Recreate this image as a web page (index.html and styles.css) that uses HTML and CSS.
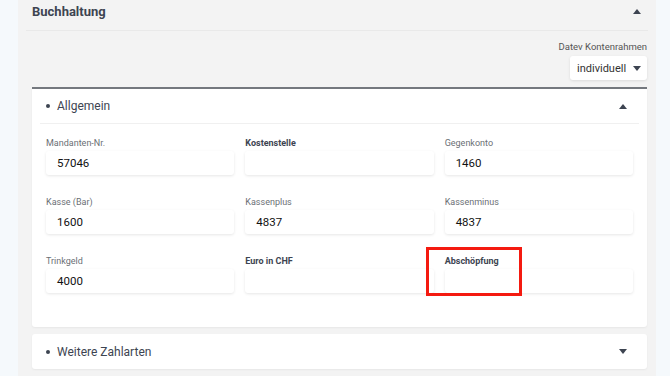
FILE: index.html
```html
<!DOCTYPE html>
<html lang="de">
<head>
  <meta charset="UTF-8" />
  <meta name="viewport" content="width=device-width, initial-scale=1.0"/>
  <title>Buchhaltung</title>
  <link rel="stylesheet" href="styles.css">
</head>
<body>
  <div class="page">
    <section class="panel">
      <div class="panel-header">
        <h2>Buchhaltung</h2>
        <svg class="caret" width="8" height="5" viewBox="0 0 8 5"><path d="M0 5 L4 0 L8 5 Z"/></svg>
      </div>

      <div class="panel-body">
        <div class="chart-select">
          <label for="datev">Datev Kontenrahmen</label>
          <div class="select-box" id="datev">
            <span>individuell</span>
            <svg class="caret" width="8" height="5" viewBox="0 0 8 5"><path d="M0 0 L8 0 L4 5 Z"/></svg>
          </div>
        </div>

        <div class="card card-open">
          <div class="card-header">
            <span class="bullet"></span>
            <span class="card-title">Allgemein</span>
            <svg class="caret" width="8" height="5" viewBox="0 0 8 5"><path d="M0 5 L4 0 L8 5 Z"/></svg>
          </div>

          <div class="fields">
            <div class="field">
              <label>Mandanten-Nr.</label>
              <div class="input">57046</div>
            </div>
            <div class="field">
              <label class="strong">Kostenstelle</label>
              <div class="input"></div>
            </div>
            <div class="field">
              <label>Gegenkonto</label>
              <div class="input">1460</div>
            </div>

            <div class="field">
              <label>Kasse (Bar)</label>
              <div class="input">1600</div>
            </div>
            <div class="field">
              <label>Kassenplus</label>
              <div class="input">4837</div>
            </div>
            <div class="field">
              <label>Kassenminus</label>
              <div class="input">4837</div>
            </div>

            <div class="field">
              <label>Trinkgeld</label>
              <div class="input">4000</div>
            </div>
            <div class="field">
              <label class="strong">Euro in CHF</label>
              <div class="input"></div>
            </div>
            <div class="field highlighted">
              <label class="strong">Abschöpfung</label>
              <div class="input"></div>
            </div>
          </div>
        </div>

        <div class="card">
          <div class="card-header">
            <span class="bullet"></span>
            <span class="card-title">Weitere Zahlarten</span>
            <svg class="caret" width="8" height="5" viewBox="0 0 8 5"><path d="M0 0 L8 0 L4 5 Z"/></svg>
          </div>
        </div>
      </div>
    </section>
  </div>
</body>
</html>
```

FILE: styles.css
```css
body {
  margin: 0;
  font-family: Roboto, "Liberation Sans", sans-serif;
  background: #f5f9fc;
  color: #3d4451;
  overflow: hidden;
}

.page {
  padding-left: 18px;
  width: 638px;
  height: 376px;
}

.panel {
  background: #f3f3f3;
  height: 100%;
}

.panel-header {
  display: flex;
  align-items: center;
  justify-content: space-between;
  height: 23px;
  margin: 0 8px;
  padding: 0 7px 7px 6px;
  border-bottom: 1px solid #e9e9e9;
}

.panel-header h2 {
  margin: 0;
  font-size: 13px;
  font-weight: 700;
  color: #3d4451;
}

.caret {
  fill: #3d4451;
  display: block;
}

.panel-body {
  padding: 9px 9px 0 14px;
}

.chart-select {
  display: flex;
  flex-direction: column;
  align-items: flex-end;
}

.chart-select label {
  font-size: 9.5px;
  line-height: 14px;
  color: #555;
  margin-bottom: 2px;
}

.select-box {
  display: flex;
  align-items: center;
  justify-content: space-between;
  box-sizing: border-box;
  width: 77px;
  height: 24px;
  padding: 0 6px 0 7px;
  background: white;
  border-radius: 3px;
  box-shadow: 0 1px 3px rgba(0, 0, 0, 0.1);
  font-size: 11px;
  color: #333;
}

.card {
  background: white;
  border-radius: 3px;
  margin-top: 7px;
  box-shadow: 0 1px 2px rgba(0, 0, 0, 0.05);
}

.card-open {
  border-top: 2px solid #74787e;
  border-radius: 0 0 3px 3px;
  padding-bottom: 34px;
}

.card-header {
  display: flex;
  align-items: center;
  height: 35px;
  padding: 0 20px 0 14px;
  font-size: 12px;
}

.card-open .card-header {
  height: 34px;
  margin: 0 8px;
  padding: 0 12px 0 6px;
  border-bottom: 1px solid #f0f0f0;
}

.bullet {
  width: 4px;
  height: 4px;
  border-radius: 50%;
  background: #3d4451;
  margin-right: 7px;
}

.card-title {
  flex: 1;
}

.fields {
  display: grid;
  grid-template-columns: repeat(3, 1fr);
  column-gap: 11px;
  row-gap: 18px;
  padding: 10px 14px 0 14px;
}

.field {
  position: relative;
}

.field label {
  display: block;
  font-size: 9px;
  line-height: 14px;
  padding-top: 2px;
  margin-bottom: 1px;
  color: #6b6f75;
}

.field label.strong {
  font-weight: 700;
  color: #3d4451;
}

.input {
  box-sizing: border-box;
  height: 24px;
  padding: 0 11px;
  background: white;
  border-radius: 3px;
  box-shadow: 0 1px 3px rgba(0, 0, 0, 0.1);
  font-size: 11.5px;
  line-height: 24px;
  color: #111;
}

.highlighted::after {
  content: "";
  position: absolute;
  left: -19px;
  top: -5px;
  width: 90px;
  height: 43px;
  border: 3px solid #f41a10;
}
```
